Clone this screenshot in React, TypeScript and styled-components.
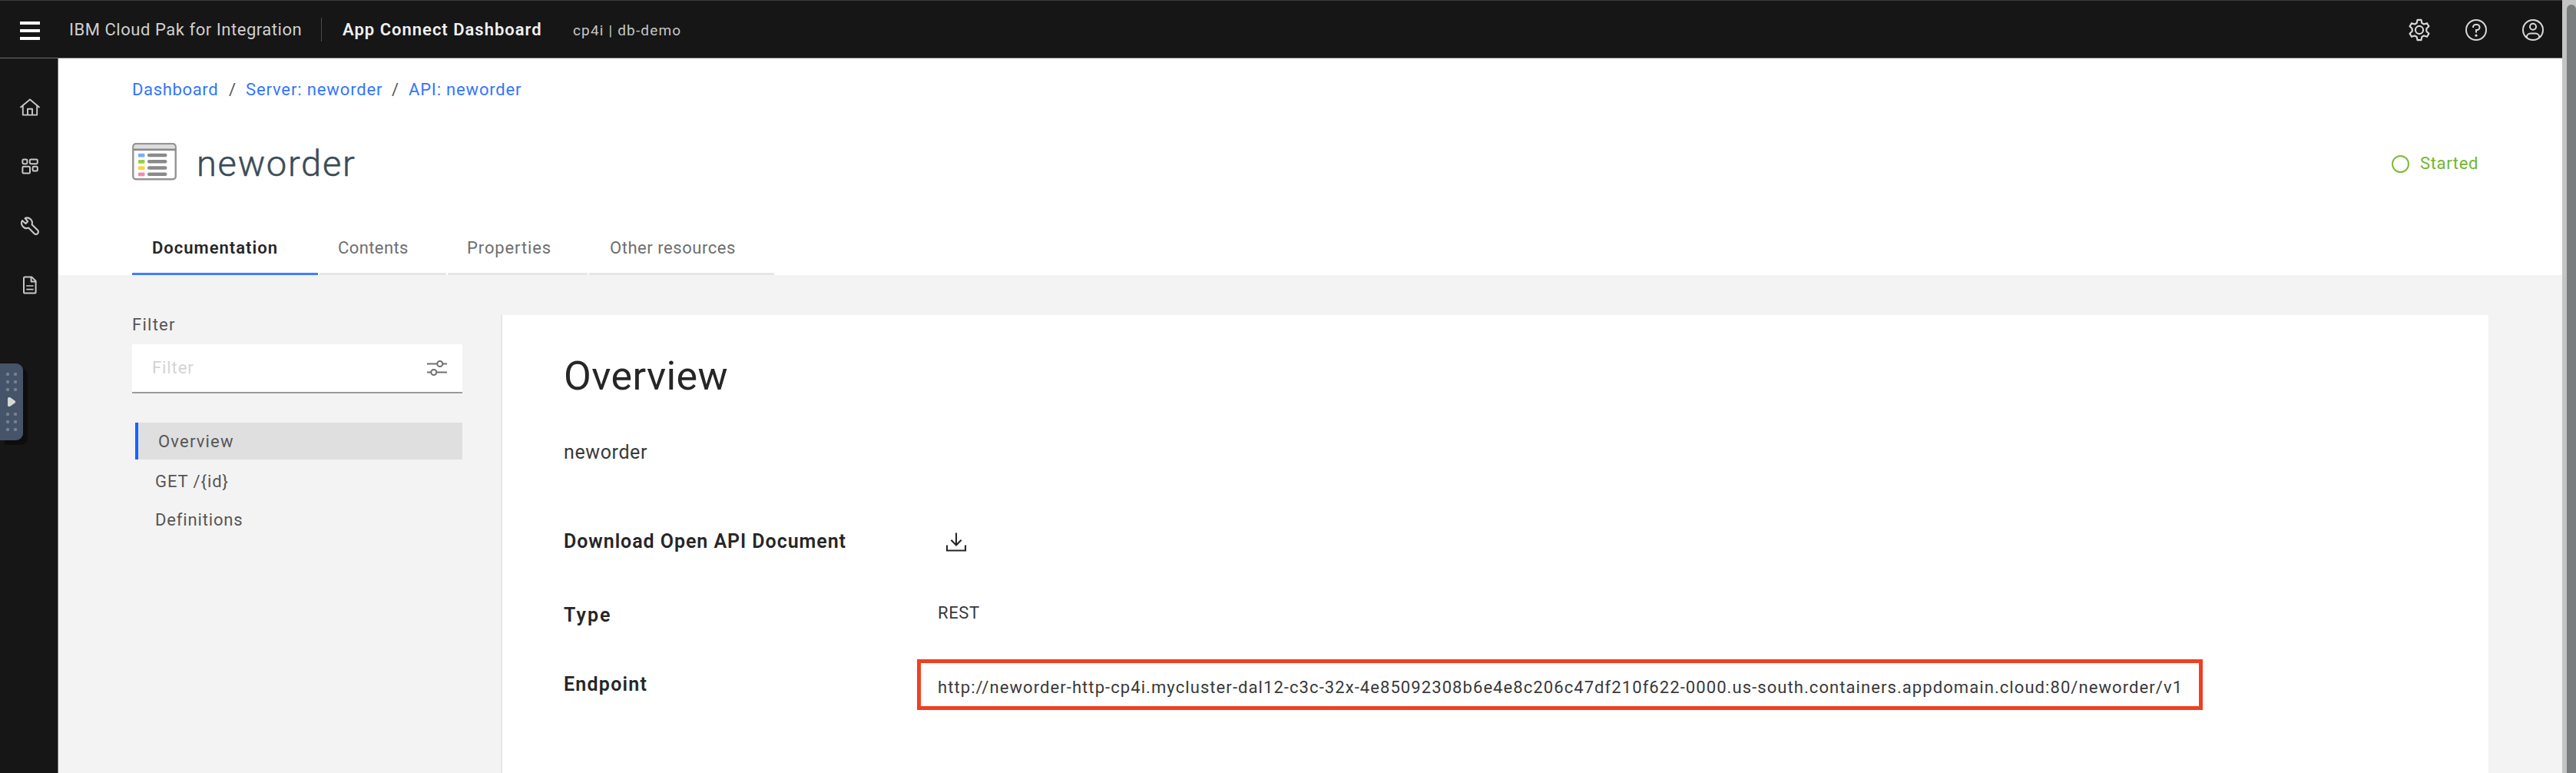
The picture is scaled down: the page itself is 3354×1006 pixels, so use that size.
import React from "react";
import styled, { createGlobalStyle, css } from "styled-components";

const GlobalStyle = createGlobalStyle`
  *, *::before, *::after { box-sizing: border-box; }
  html, body { margin: 0; padding: 0; background: #ffffff; overflow: hidden; }
  body {
    font-family: Roboto, "Liberation Sans", sans-serif;
    font-size: 22px;
    line-height: 26px;
    color: #262626;
  }
`;

const Window = styled.div`
  display: flex;
  width: 3354px;
  height: 1006px;
  overflow: hidden;
`;

const Frame = styled.div`
  display: flex;
  flex-direction: column;
  flex: 1;
  min-width: 0;
`;

/* ---------- header ---------- */

const Header = styled.header`
  display: flex;
  align-items: center;
  height: 76px;
  padding: 1px 23px 0 26px;
  background: #161616;
  border-top: 1px solid #3a3d3d;
  border-bottom: 1px solid #6d6d6d;
  color: #e4e4e4;
  white-space: nowrap;
`;

const MenuButton = styled.button`
  display: flex;
  flex-direction: column;
  justify-content: space-between;
  width: 26px;
  height: 24px;
  margin: 3px 0 0;
  padding: 0;
  border: 0;
  background: none;
`;

const MenuBar = styled.span`
  height: 4px;
  background: #ffffff;
`;

const Product = styled.span`
  width: 328px;
  margin-left: 38px;
  letter-spacing: 0.54px;
  color: #cfcfcf;
`;

const Divider = styled.span`
  width: 1px;
  height: 31px;
  background: #4a4a4a;
`;

const AppName = styled.strong`
  width: 300px;
  margin-left: 27px;
  font-weight: 600;
  letter-spacing: 1px;
  color: #f0f0f0;
`;

const Namespace = styled.span`
  flex: 1;
  padding-top: 3px;
  font-size: 19px;
  letter-spacing: 1.17px;
  color: #c6c6c6;
`;

const HeaderActions = styled.div`
  display: flex;
  gap: 44px;
`;

const Icon = styled.svg<{ $w: number; $h?: number }>`
  display: block;
  flex: none;
  width: ${(p) => p.$w}px;
  height: ${(p) => p.$h ?? p.$w}px;
  overflow: visible;
`;

/* ---------- body ---------- */

const Body = styled.div`
  display: flex;
  flex: 1;
  min-height: 0;
`;

const Sidebar = styled.nav`
  position: relative;
  display: flex;
  flex-direction: column;
  align-items: center;
  gap: 45px;
  width: 76px;
  padding: 48px 0 0 2px;
  background: #161616;
  border-right: 1px solid #777777;
`;

const NavSlot = styled.a`
  display: flex;
  align-items: center;
  justify-content: center;
  width: 32px;
  height: 32px;
`;

/* Floats over the navigation rail */
const DrawerHandle = styled.div`
  position: absolute;
  left: 0;
  top: 397px;
  display: flex;
  flex-direction: column;
  align-items: center;
  gap: 12px;
  width: 30px;
  height: 100px;
  padding-top: 12px;
  border-radius: 0 9px 9px 0;
  background: #455468;
  box-shadow: 6px 6px 0 #0d0d0d;
`;

const DotGrid = styled.div`
  display: grid;
  grid-template-columns: 4px 4px;
  grid-auto-rows: 4px;
  gap: 6px;
`;

const Dot = styled.i`
  border-radius: 1px;
  background: #76808e;
`;

const ArrowWrap = styled.div`
  display: flex;
  align-items: center;
  height: 4px;
`;

const Main = styled.main`
  display: flex;
  flex-direction: column;
  flex: 1;
  min-width: 0;
  background: #f3f3f3;
`;

const PageHead = styled.section`
  display: flex;
  flex-direction: column;
  height: 282px;
  padding: 28px 111px 0 96px;
  background: #ffffff;
`;

const Breadcrumb = styled.div`
  display: flex;
  height: 26px;
  white-space: nowrap;
`;

const Crumb = styled.a<{ $width: number; $track: number }>`
  width: ${(p) => p.$width}px;
  letter-spacing: ${(p) => p.$track}px;
  color: #3376fb;
`;

const Slash = styled.span`
  width: 22px;
  color: #565656;
`;

const TitleRow = styled.div`
  display: flex;
  align-items: center;
  height: 60px;
  margin-top: 53px;
`;

const TitleIcon = styled.span`
  padding-bottom: 5px;
`;

const Title = styled.h1`
  flex: 1;
  margin: 0 0 0 26px;
  font-size: 47px;
  font-weight: 300;
  line-height: 60px;
  letter-spacing: 1.75px;
  color: #3b4c58;
  -webkit-text-stroke: 0.5px #3b4c58;
`;

const Status = styled.div`
  display: flex;
  align-items: center;
  gap: 14px;
  width: 111px;
  letter-spacing: 0.65px;
  color: #72b62b;
`;

const StatusRing = styled.span`
  flex: none;
  width: 23px;
  height: 23px;
  border: 2.5px solid #7cbc3c;
  border-radius: 50%;
`;

const Tabs = styled.div`
  display: flex;
  gap: 2px;
  height: 70px;
  margin-top: auto;
`;

const Tab = styled.a<{ $width: number; $indent?: number; $track: number; $active?: boolean }>`
  width: ${(p) => p.$width}px;
  padding: 22px 0 0 ${(p) => p.$indent ?? 26}px;
  border-bottom: 3px solid #e6e6e6;
  letter-spacing: ${(p) => p.$track}px;
  color: #6f6f6f;
  white-space: nowrap;
  ${(p) =>
    p.$active &&
    css`
      border-bottom-color: #4080ff;
      font-weight: 600;
      color: #262626;
    `}
`;

const Columns = styled.div`
  display: flex;
  flex: 1;
  min-height: 0;
  padding: 52px 96px 0;
`;

const FilterColumn = styled.aside`
  display: flex;
  flex-direction: column;
  width: 430px;
  color: #565656;
`;

const FilterLabel = styled.label`
  height: 38px;
  letter-spacing: 1.26px;
`;

const FilterBox = styled.div`
  display: flex;
  align-items: center;
  justify-content: space-between;
  height: 64px;
  padding: 0 20px 0 26px;
  border-bottom: 2px solid #9a9a9a;
  background: #ffffff;
`;

const Placeholder = styled.span`
  letter-spacing: 0.9px;
  color: #d4d4d4;
`;

const Toc = styled.div`
  display: flex;
  flex-direction: column;
  margin: 38px 0 0 4px;
`;

const TocItem = styled.a<{ $track: number; $active?: boolean }>`
  height: 50px;
  padding-left: 26px;
  line-height: 58px;
  letter-spacing: ${(p) => p.$track}px;
  ${(p) =>
    p.$active &&
    css`
      height: 48px;
      border-left: 4px solid #1763fe;
      background: #dfdfdf;
      line-height: 50px;
    `}
`;

const Panel = styled.article`
  display: flex;
  flex-direction: column;
  flex: 1;
  margin-left: 50px;
  padding: 50px 0 0 80px;
  border-left: 2px solid #e2e6ea;
  background: #ffffff;
`;

const PanelTitle = styled.h2`
  margin: 0;
  font-size: 52px;
  font-weight: 400;
  line-height: 60px;
  letter-spacing: 0.4px;
  color: #262626;
`;

const Description = styled.p`
  margin: 54px 0 86px;
  font-size: 25px;
  line-height: 30px;
  letter-spacing: 0.61px;
  color: #393939;
`;

const Field = styled.div<{ $gap?: number }>`
  display: grid;
  grid-template-columns: 460px 1fr;
  align-items: center;
  min-height: 30px;
  margin-top: ${(p) => p.$gap ?? 0}px;
`;

const FieldName = styled.span<{ $track: number }>`
  font-size: 25px;
  font-weight: 600;
  line-height: 30px;
  letter-spacing: ${(p) => p.$track}px;
  color: #262626;
`;

const FieldValue = styled.span`
  justify-self: start;
  height: 30px;
  padding-left: 27px;
  line-height: 24px;
  letter-spacing: 0.63px;
  color: #393939;
`;

const EndpointValue = styled.span`
  justify-self: start;
  width: 1674px;
  height: 66px;
  padding: 6px 0 0 22px;
  border: 5px solid #ee4023;
  line-height: 52px;
  letter-spacing: 1.075px;
  color: #393939;
  white-space: nowrap;
`;

const DownloadButton = styled.button`
  justify-self: start;
  margin-left: 38px;
  padding: 0;
  border: 0;
  background: none;
`;

/* ---------- page scrollbar ---------- */

const ScrollTrack = styled.div`
  width: 18px;
  padding: 6px 0 0 6px;
  background: #c2c3c2;
`;

const ScrollThumb = styled.div`
  width: 12px;
  height: 1000px;
  border-radius: 7px 7px 0 0;
  background: #797d7d;
`;

/* ---------- icons ---------- */

const GearIcon = () => (
  <Icon $w={30} viewBox="1.2 1.2 29.6 29.6" fill="none" stroke="#d8d8d8" strokeWidth={2.1} strokeLinejoin="round">
    <path d="M13.6 3h4.8l.9 4.1 2.6 1.5 4-1.3 2.4 4.1-3.1 2.9v3.4l3.1 2.9-2.4 4.1-4-1.3-2.6 1.5-.9 4.1h-4.8l-.9-4.1-2.6-1.5-4 1.3-2.4-4.1 3.1-2.9v-3.4l-3.1-2.9 2.4-4.1 4 1.3 2.6-1.5z" />
    <circle cx="16" cy="16" r="5" />
  </Icon>
);

const HelpIcon = () => (
  <Icon $w={30} viewBox="1 1 30 30" fill="#d8d8d8">
    <path d="M16 2A14 14 0 1 0 30 16 14 14 0 0 0 16 2Zm0 26A12 12 0 1 1 28 16 12 12 0 0 1 16 28Z" />
    <circle cx="16" cy="23.2" r="1.6" />
    <path d="M17 8H15.5A4.49 4.49 0 0 0 11 12.49V13h2v-.5A2.5 2.5 0 0 1 15.5 10H17a2.5 2.5 0 0 1 0 5H15v4.5h2V17a4.5 4.5 0 0 0 0-9Z" />
  </Icon>
);

const UserIcon = () => (
  <Icon $w={30} viewBox="1 1 30 30" fill="none" stroke="#d8d8d8" strokeWidth={2}>
    <circle cx="16" cy="16" r="13" />
    <circle cx="16" cy="11.8" r="4" />
    <path d="M7.8 26v-.6a5 5 0 0 1 5-5h6.4a5 5 0 0 1 5 5v.6" />
  </Icon>
);

const HomeIcon = () => (
  <Icon $w={26} viewBox="0 0 26 26" fill="none" stroke="#c8c8c8" strokeWidth={1.9} strokeLinejoin="round">
    <path d="M1 12.4 13 2.6l12 9.8" strokeLinecap="round" />
    <path d="M3.8 10.6V22.6h18.4V10.6" />
    <path d="M10 22.6v-7.8h6v7.8" />
  </Icon>
);

const AppsIcon = () => (
  <Icon $w={22} $h={21} viewBox="0 1 22 21" fill="none" stroke="#c8c8c8" strokeWidth={2}>
    <rect x="1.4" y="1.4" width="6" height="5.8" rx="1.4" />
    <rect x="10.8" y="1.4" width="10" height="5.8" rx="1.4" />
    <rect x="1.4" y="10.8" width="9.6" height="8.8" rx="1.4" />
    <rect x="14.6" y="10.8" width="6.2" height="5.8" rx="1.4" />
  </Icon>
);

const WrenchIcon = () => (
  <Icon $w={24} viewBox="0 0 24 24" fill="none" stroke="#c8c8c8" strokeWidth={2.1} strokeLinejoin="round">
    <path d="M2 5 6.4 9 9.2 6.2 5.6 2A6.7 6.7 0 0 1 14.6 10.2L22 17.6A3 3 0 0 1 17.6 22L10.2 14.6A6.7 6.7 0 0 1 2 5Z" />
  </Icon>
);

const DocumentIcon = () => (
  <Icon $w={18} $h={24} viewBox="0 0 18 24" fill="none" stroke="#c8c8c8" strokeWidth={2} strokeLinejoin="round">
    <path d="M2.4 1.4h8.8L16.6 6.8V21.2a1.4 1.4 0 0 1-1.4 1.4H2.4A1.4 1.4 0 0 1 1 21.2V2.8A1.4 1.4 0 0 1 2.4 1.4Z" />
    <path d="M10.6 1.6v5.8h5.8" />
    <path d="M4.2 13h9.4M4.2 17.6h9.4" strokeWidth="1.7" />
  </Icon>
);

const ApiIcon = () => (
  <Icon $w={58} $h={49} viewBox="0 0 58 49">
    <rect x="1.3" y="1.3" width="55.4" height="46" rx="3.6" fill="#fff" stroke="#949494" strokeWidth="2.4" />
    <path d="M2.5 8V4.5a2 2 0 0 1 2-2h49a2 2 0 0 1 2 2V8z" fill="#dedede" />
    <path d="M1.3 8.8h55.4" stroke="#8a8a8a" strokeWidth="2.4" />
    {["#82aaf8", "#8fd14a", "#fdd433", "#f986b0"].map((c, i) => (
      <g key={c} transform={`translate(0 ${13.8 + i * 8.25})`}>
        <rect x="8" width="8.4" height="4.8" rx="0.8" fill={c} />
        <rect x="20" width="25.4" height="4.4" rx="2" fill="#8a8a8a" />
      </g>
    ))}
  </Icon>
);

const SlidersIcon = () => (
  <Icon $w={26} $h={22} viewBox="0 0 26 22" fill="none" stroke="#6f6f6f" strokeWidth={2}>
    <path d="M0 5.5h13M20.5 5.5H26M0 16.5h5M12.5 16.5H26" />
    <circle cx="16.8" cy="5.5" r="3.5" />
    <circle cx="8.8" cy="16.5" r="3.5" />
  </Icon>
);

const DownloadIcon = () => (
  <Icon $w={26} $h={25} viewBox="0 0 26 25" fill="none" stroke="#262626" strokeWidth={2.1}>
    <path d="M13 .5v15.8M6.4 9.8 13 16.4l6.6-6.6" />
    <path d="M1 16.5v7h24v-7" />
  </Icon>
);

const Dots = () => (
  <DotGrid>
    {Array.from({ length: 6 }, (_, i) => (
      <Dot key={i} />
    ))}
  </DotGrid>
);

export default function App() {
  return (
    <Window>
      <GlobalStyle />
      <Frame>
        <Header>
          <MenuButton aria-label="Menu">
            <MenuBar />
            <MenuBar />
            <MenuBar />
          </MenuButton>
          <Product>IBM Cloud Pak for Integration</Product>
          <Divider />
          <AppName>App Connect Dashboard</AppName>
          <Namespace>cp4i | db-demo</Namespace>
          <HeaderActions>
            <GearIcon />
            <HelpIcon />
            <UserIcon />
          </HeaderActions>
        </Header>
        <Body>
          <Sidebar>
            <NavSlot><HomeIcon /></NavSlot>
            <NavSlot><AppsIcon /></NavSlot>
            <NavSlot><WrenchIcon /></NavSlot>
            <NavSlot><DocumentIcon /></NavSlot>
            <DrawerHandle>
              <Dots />
              <ArrowWrap>
                <Icon $w={10} $h={12} viewBox="0 0 10 12" fill="#d6d6d6">
                  <path d="M0 1.5Q0 0 1.5 0H3L10 5v2L3 12H1.5Q0 12 0 10.5z" />
                </Icon>
              </ArrowWrap>
              <Dots />
            </DrawerHandle>
          </Sidebar>
          <Main>
            <PageHead>
              <Breadcrumb>
                <Crumb $width={126} $track={0.65}>Dashboard</Crumb>
                <Slash>/</Slash>
                <Crumb $width={190} $track={0.87}>Server: neworder</Crumb>
                <Slash>/</Slash>
                <Crumb $width={160} $track={0.82}>API: neworder</Crumb>
              </Breadcrumb>
              <TitleRow>
                <TitleIcon><ApiIcon /></TitleIcon>
                <Title>neworder</Title>
                <Status>
                  <StatusRing />
                  Started
                </Status>
              </TitleRow>
              <Tabs>
                <Tab $width={242} $track={1.01} $active>Documentation</Tab>
                <Tab $width={165} $indent={24} $track={0.4}>Contents</Tab>
                <Tab $width={182} $indent={25} $track={0.88}>Properties</Tab>
                <Tab $width={241} $indent={27} $track={0.54}>Other resources</Tab>
              </Tabs>
            </PageHead>
            <Columns>
              <FilterColumn>
                <FilterLabel>Filter</FilterLabel>
                <FilterBox>
                  <Placeholder>Filter</Placeholder>
                  <SlidersIcon />
                </FilterBox>
                <Toc>
                  <TocItem $track={1.19} $active>Overview</TocItem>
                  <TocItem $track={0.93}>GET /&#123;id&#125;</TocItem>
                  <TocItem $track={0.85}>Definitions</TocItem>
                </Toc>
              </FilterColumn>
              <Panel>
                <PanelTitle>Overview</PanelTitle>
                <Description>neworder</Description>
                <Field>
                  <FieldName $track={0.95}>Download Open API Document</FieldName>
                  <DownloadButton aria-label="Download"><DownloadIcon /></DownloadButton>
                </Field>
                <Field $gap={66}>
                  <FieldName $track={2.03}>Type</FieldName>
                  <FieldValue>REST</FieldValue>
                </Field>
                <Field $gap={42}>
                  <FieldName $track={1.24}>Endpoint</FieldName>
                  <EndpointValue>
                    http://neworder-http-cp4i.mycluster-dal12-c3c-32x-4e85092308b6e4e8c206c47df210f622-0000.us-south.containers.appdomain.cloud:80/neworder/v1
                  </EndpointValue>
                </Field>
              </Panel>
            </Columns>
          </Main>
        </Body>
      </Frame>
      <ScrollTrack>
        <ScrollThumb />
      </ScrollTrack>
    </Window>
  );
}
